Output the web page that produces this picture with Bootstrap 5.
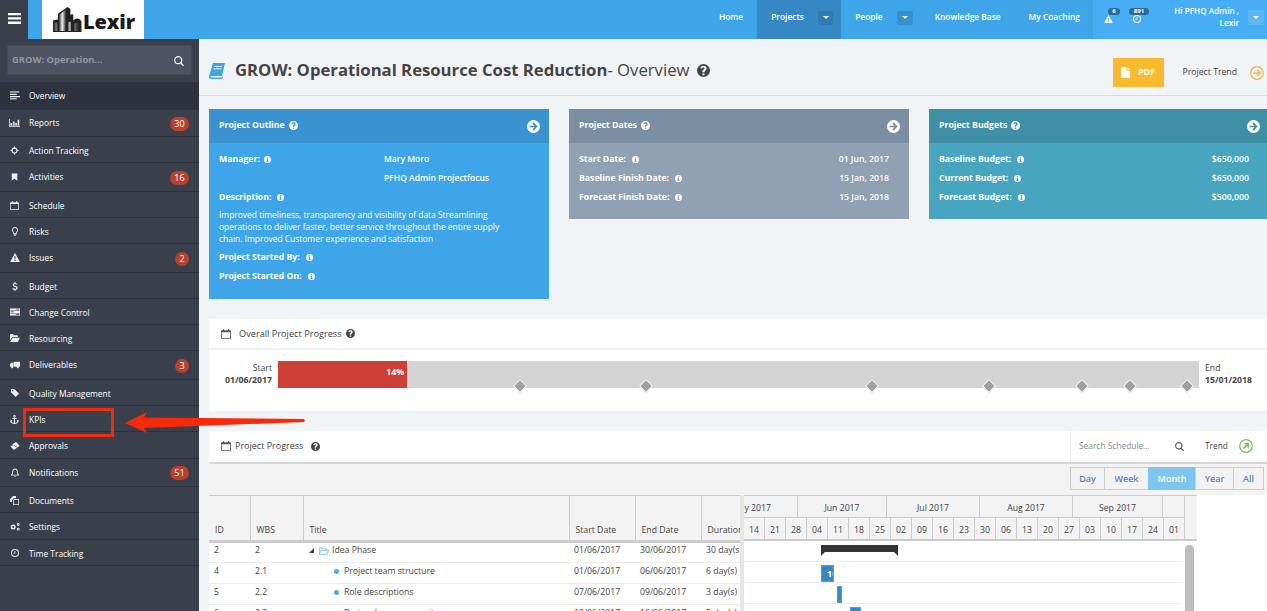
<!DOCTYPE html>
<html lang="en">
<head>
<meta charset="utf-8">
<title>Lexir - Overview</title>
<link rel="stylesheet" href="https://cdn.jsdelivr.net/npm/bootstrap@5.3.0/dist/css/bootstrap.min.css">
<style>
html,body{height:611px;overflow:hidden}
body{font-family:"Open Sans","Liberation Sans",sans-serif;font-size:9px;background:#f0f4f7;color:#444;position:relative}
svg.ic{display:block;flex:none;fill:currentColor}
.topbar{height:39px;background:#3fa5e9;color:#fff}
.tb-toggle{width:28px;background:#3a3f4c;padding-bottom:3px}
.tb-logo{width:102px;margin-left:14px;background:#fff;color:#1a1a1a;font-weight:800;font-size:20px;padding-left:11px;letter-spacing:-.1px}
.tb-logo span{margin:5px 0 0 1px}
.tb-nav{margin-left:auto;height:39px;font-size:8.4px;font-weight:600}
.tb-link{height:39px;color:#fff;text-decoration:none;padding-bottom:4px}
.tb-home{margin-right:14px}
.tb-projects{width:84px;background:#3588c4;padding-left:14px;margin-right:14px}
.tb-people{margin-right:22px}
.tb-kb{margin-right:28px}
.tb-coach{margin-right:13px}
.tb-drop{width:15px;height:14px;border-radius:2px;background:#2f7cb4;margin-left:auto;margin-right:8px}
.tb-people .tb-drop{background:#3590d0;margin-left:14px;margin-right:0;width:16px}
.tb-drop::after{content:"";border:3px solid transparent;border-top:3px solid #fff;margin-top:3px}
.tb-user{width:174px;flex:none;background:#47aef5;position:relative;padding-left:10px}
.tb-alert{width:26px;height:39px;position:relative;flex:none}
.tb-pill{position:absolute;top:8px;background:#2b6a99;color:#fff;font-size:6px;font-weight:700;line-height:7px;height:7px;border-radius:4px;text-align:center}
.tb-ic1{margin:0 0 0 1px;position:relative;top:-1px}
.tb-ic2{margin:0 0 0 4px;position:relative;top:-1px}
.tb-name{width:84px;flex:none;margin-left:6px;margin-bottom:5px;text-align:right;line-height:12px;font-size:8.2px}
.tb-user .tb-drop{background:#5cb8f5;width:16px;height:15px;margin:0 3px 5px 9px;flex:none}
.sidenav{width:199px;height:572px;background:#3a3f4c;flex:none;color:#fff}
.side-searchwrap{height:43px;padding:6px 7px 7px}
.side-search{height:30px;background:#4e5262;border:1px solid #454957;padding:1px 7px 0 4px;color:#92959f;font-weight:700;font-size:9.4px}
.side-search svg{color:#fff}
.side-item{padding:3px 10px 0 8px;border-bottom:1px solid #2d313b;color:#fff;text-decoration:none;font-size:8.4px}
.side-item:hover{color:#fff}
.side-item.up{padding-top:1px}
.side-ic{width:13px;margin-right:8px;display:flex;justify-content:center;color:#eee;position:relative;top:-1px}
.side-active{background:#2e323e;border-bottom:0}
.h26{height:26px}.h27{height:27px}.h28{height:28px}.h29{height:29px}
.side-count{margin-left:auto;background:#b8402f;border-radius:9px;min-width:14px;height:14px;line-height:14px;text-align:center;font-size:9px;font-weight:400;padding:0 4px}
.side-count.wide{width:19px}
.mainpane{flex:1;min-width:0;height:572px;overflow:hidden}
.headrow{height:57px;border-bottom:1px solid #d5dde3;padding:7px 0 0 10px;position:relative}
.headrow h1{font-size:16.7px;font-weight:700;color:#444;margin:0 8px 0 10px;white-space:nowrap}
.headrow h1 span{font-weight:400}
.pdfbtn{width:51px;height:29px;background:#f8bb2f;border:0;border-radius:0;color:#fff;font-size:9px;font-weight:700;margin:3px 19px 0 auto;padding:0}
.pdfbtn:hover{background:#f8bb2f;color:#fff}
.trendlink{font-size:8.7px;color:#444;text-decoration:none;margin:5px 3px 0 0}
.trendlink svg{margin-left:13px}
.infocards{padding:13px 0 0 10px;gap:20px;height:223px;align-items:flex-start}
.infocard{width:340px;flex:none;border:0;border-radius:0;color:#fff;font-size:8.7px}
.infocard .card-header{height:34px;border:0;border-radius:0;padding:9px 9px 0 10px;font-weight:700;color:#fff}
.infocard .card-body{padding:7px 10px 0;}
.head-arrow{margin-top:2px}
.blue-card{background:#3fa5e9;height:190px}.blue-card .card-header{background:#3a92d1}
.slate-card{background:#8fa1b3;height:110px}.slate-card .card-header{background:#7a8fa3}
.teal-card{background:#48a5c0;height:110px}.teal-card .card-header{background:#3f90a6}
.kv{height:19px;display:flex;align-items:center}
.kv b{font-weight:700;margin-right:6px}
.kv .val{margin-left:auto;font-weight:600}
.blue-card .kv .val{margin-left:0;font-weight:600;font-size:8.5px}
.blue-card .kv b.fixed{width:165px;margin-right:0}
.kv-hole{width:165px}
.desc{line-height:12px;margin:2px 0 3px;font-weight:400;font-size:8.45px;max-width:296px}
.whitepanel{background:#fff;border:0;border-radius:0;margin-left:10px;color:#444}
.panel-overall{height:92px}
.panel-head{height:31px;border-bottom:2px solid #eef0f2;padding-left:12px;font-size:9.2px;font-weight:400}
.track-row{padding-top:11px;position:relative}
.track-start{width:69px;text-align:right;line-height:12px;padding:1px 6px 0 0;font-size:8.7px}
.track-start b,.track-end b{display:block;font-weight:700}
.track-end{margin-left:6px;line-height:12px;padding-top:1px;font-size:8.7px}
.track{width:921px;height:27px;background:#d4d4d4;position:relative}
.track .progress-bar{width:129px;height:27px;background:#ce3f38;font-weight:700;color:#fff;text-align:right;padding:5px 3px 0 0;font-size:8.7px;overflow:visible;display:block}
.diamond{position:absolute;top:20px;width:10px;height:10px;background:#a0a0a0;border:1px solid #fff;transform:rotate(45deg)}
.panel-progress{margin-top:20px;height:180px}
.panel-head2{height:33px;border-bottom:2px solid #d6d6d6;padding:0 0 1px 12px;font-size:9px;font-weight:400}
.schedule-search{margin-left:auto;height:31px;border-left:1px solid #eee;width:197px;padding-left:8px;color:#888;font-size:8.4px}
.schedule-search .trendtxt{color:#444}
.schedule-search .glass{color:#555;margin-left:auto;margin-right:21px}
.zoombar{height:31px;background:#f3f3f3;padding:3px 3px 0 0;justify-content:flex-end;display:flex}
.zoombtn{height:23px;border:1px solid #ccc;background:#f3f3f3;color:#5b82c2;font-size:9px;line-height:21px;text-align:center;margin-left:-1px;font-weight:600}
.zoombtn.on{background:#7fc6ef;color:#fff;border-color:#7fc6ef}
.gantt{height:116px;align-items:flex-start}
.gantt-left{width:531px;flex:none}
.gtable{width:531px;table-layout:fixed;border-collapse:collapse;margin:0;font-size:8.7px;color:#444}
.gtable th{height:46px;background:#f3f3f3;border-right:1px solid #ccc;border-top:1px solid #ccc;border-bottom:3px solid #ccc;padding:0 0 3px 6px;vertical-align:bottom;font-weight:400;white-space:nowrap;overflow:hidden}
.gtable td{height:21px;border-bottom:1px solid #ececec;padding:0 0 3px 5px;white-space:nowrap;overflow:hidden;vertical-align:middle;background:#fff}
.treecell{display:flex;align-items:center}
.dot{width:5px;height:5px;border-radius:50%;background:#4cb0dc;margin:0 5px 0 26px}
.split{width:4px;height:116px;background:#e6e6e6;flex:none}
.gantt-right{width:453px;flex:none}
.g-months,.g-weeks{display:flex;background:#f3f3f3;width:453px}
.g-months{height:23px;border-top:1px solid #ccc}
.g-months span{flex:none;height:22px;padding-top:1px;line-height:22px;text-align:center;border-right:1px solid #ccc;border-bottom:1px solid #ccc;font-size:8.7px;white-space:nowrap;overflow:hidden}
.g-months .g-clipped{width:54px;text-align:right;padding-right:26px}
.g-weeks{height:23px;border-bottom:2px solid #ccc}
.g-weeks span{flex:none;width:21px;height:21px;text-align:center;line-height:25px;border-right:1px solid #ccc;font-size:8.7px}
.g-body{display:flex;background:#fff}
.g-rows{width:437px;background:#fff;flex:none}
.g-row{height:21px;border-bottom:1px solid #ececec;position:relative}
.g-summary{position:absolute;left:77px;top:4px;width:77px;height:7px;background:#333}
.g-summary::before,.g-summary::after{content:"";position:absolute;top:7px;border:2.5px solid transparent;border-top-color:#333}
.g-summary::before{left:0;border-left-color:#333}
.g-summary::after{right:0;border-right-color:#333}
.g-task{position:absolute;top:3px;height:17px;background:#3588c4;border:1px solid #45a5e4;color:#fff;font-size:9px;font-weight:700;line-height:15px;overflow:hidden;padding-left:5px;white-space:nowrap}
.g-scroll{width:16px;background:#fff;flex:none;height:72px}
.g-thumb{width:9px;height:70px;margin:4px 0 0 4px;background:#bdbdbd;border-radius:5px}
.callout-box{position:absolute;left:23px;top:408px;width:91px;height:29px;border:3px solid #ee2c12;z-index:5}
.callout-arrow{position:absolute;left:120px;top:405px;z-index:5}
</style>
</head>
<body>
<svg width="0" height="0" class="position-absolute">
<defs>
<linearGradient id="twr" x1="0" y1="0" x2="1" y2="0"><stop offset="0" stop-color="#555"/><stop offset=".45" stop-color="#eee"/><stop offset="1" stop-color="#222"/></linearGradient>
<symbol id="i-left" viewBox="0 0 12 10"><path d="M0 0h11v1.500H0zM0 2.800h8v1.500H0zM0 5.600h12v1.500H0zM0 8.400h8v1.500H0z"/></symbol>
<symbol id="i-bars" viewBox="0 0 14 10"><path d="M0 0h1v9h13v1H0zM2 5h2v3.500H2zM5 3h2v5.500H5zM8 5h2v3.500H8zM11 1h2v7.500h-2z"/></symbol>
<symbol id="i-cross" viewBox="0 0 12 12"><path fill-rule="evenodd" d="M6 0l1 2.100A4 4 0 0 1 9.900 5L12 6l-2.100 1A4 4 0 0 1 7 9.900L6 12 5 9.900A4 4 0 0 1 2.100 7L0 6l2.100-1A4 4 0 0 1 5 2.100zM6 3.500a2.500 2.500 0 1 0 0 5 2.500 2.500 0 0 0 0-5z"/></symbol>
<symbol id="i-mark" viewBox="0 0 10 11"><path d="M1 0h8v11L5 8l-4 3z"/></symbol>
<symbol id="i-cal" viewBox="0 0 12 12"><path fill-rule="evenodd" d="M1 1.500h1.500V0h1.200v1.500h4.600V0h1.200v1.500H11a1 1 0 0 1 1 1V11a1 1 0 0 1-1 1H1a1 1 0 0 1-1-1V2.500a1 1 0 0 1 1-1zM1 4v7h10V4z"/></symbol>
<symbol id="i-bulb" viewBox="0 0 8 12"><path fill-rule="evenodd" d="M4 0a4 4 0 0 1 2.500 7.100V9h-5V7.100A4 4 0 0 1 4 0zm0 1.200a2.800 2.800 0 0 0-1.500 5.200V8h3V6.400A2.800 2.800 0 0 0 4 1.200zM2 9.800h4v1H5.200L4.500 12h-1l-.7-1.200H2z"/></symbol>
<symbol id="i-warn" viewBox="0 0 12 11"><path fill-rule="evenodd" d="M6 0l6 11H0zM5.300 4l.2 3.800h1L6.700 4zm0 4.500v1.300h1.400V8.500z"/></symbol>
<symbol id="i-usd" viewBox="0 0 8 12"><path d="M3.400 0h1.200v1.500c1 .1 2 .5 2.700 1L6.600 3.700C5.800 3.100 5 2.800 4.100 2.800c-.9 0-1.400.4-1.400 1 0 1.700 4.800 1 4.800 4.200 0 1.400-1 2.300-2.900 2.500V12H3.400v-1.500c-1.200-.1-2.300-.6-3-1.300l.8-1.200c.9.700 1.800 1.100 2.800 1.100 1.100 0 1.700-.4 1.700-1.100 0-1.800-4.800-1-4.800-4.200 0-1.300 1-2.200 2.500-2.400z"/></symbol>
<symbol id="i-server" viewBox="0 0 13 10"><path d="M0 0h13v2.800H0zM0 3.500h13v2.800H0zM0 7h13v2.800H0z" /><path fill="#3a3f4c" d="M8 1h4v.8H8zM1 4.500h4v.8H1zM8 8h4v.8H8z"/></symbol>
<symbol id="i-folder" viewBox="0 0 14 11"><path d="M0 1a1 1 0 0 1 1-1h3l1 1.500h5a1 1 0 0 1 1 1V4H3.500L0 8.500zM3.800 5H14l-3 6H0z"/></symbol>
<symbol id="i-truck" viewBox="0 0 14 10"><path d="M5 0h9v7.500H5zM0 4l2-2h2.500v5.500H0zM3 10a1.500 1.500 0 1 1 0-3 1.500 1.500 0 0 1 0 3zM11 10a1.500 1.500 0 1 1 0-3 1.500 1.500 0 0 1 0 3z"/></symbol>
<symbol id="i-tag" viewBox="0 0 11 11"><path fill-rule="evenodd" d="M0 0h4.500L11 6.500 6.500 11 0 4.500zM2.200 1.500a.9.900 0 1 0 0 1.800.9.900 0 0 0 0-1.800z"/></symbol>
<symbol id="i-anchor" viewBox="0 0 12 12"><path fill-rule="evenodd" d="M6 0a1.600 1.600 0 0 1 .8 3v1h2v1.200h-2v5.300c1.500-.2 2.700-1 3-2L8.600 8 11 6l1 3-.9-.3C10.400 11 8.400 12 6 12s-4.400-1-5.100-2.300L0 10l1-4 2.400 2-1.200.5c.3 1 1.500 1.800 3 2V5.200h-2V4h2V3A1.600 1.600 0 0 1 6 0zm0 1a.6.600 0 1 0 0 1.200A.6.600 0 0 0 6 1z"/></symbol>
<symbol id="i-ticket" viewBox="0 0 13 11"><path d="M8 0l5 5-8 6-5-5 1.300-1.300a1.200 1.200 0 0 0 1.700-1.700z"/><path fill="#3a3f4c" d="M4.500 4.500l4 3 .5-.6-4-3z"/></symbol>
<symbol id="i-bell" viewBox="0 0 11 12"><path fill-rule="evenodd" d="M5.500 0a1 1 0 0 1 1 1c2 .4 2.700 2 2.700 4 0 2 .7 3 1.800 4v1H0V9c1.100-1 1.800-2 1.800-4 0-2 .7-3.600 2.700-4a1 1 0 0 1 1-1zm0 2C3.700 2 3 3.400 3 5c0 1.700-.5 3-1.200 4h7.400C8.500 8 8 6.700 8 5c0-1.600-.7-3-2.500-3zM4 10.700h3A1.500 1.500 0 0 1 5.500 12 1.500 1.500 0 0 1 4 10.700z"/></symbol>
<symbol id="i-copy" viewBox="0 0 12 12"><path fill-rule="evenodd" d="M4 0h4v3H5L2.500 5.500V8H0V4zM5.500 4H12v8H4V6zm.5 1.100L5 6.200V11h6V5.100z"/></symbol>
<symbol id="i-cogs" viewBox="0 0 14 11"><path fill-rule="evenodd" d="M4.500 2a3.500 3.500 0 1 1 0 7 3.500 3.500 0 0 1 0-7zm0 2a1.500 1.500 0 1 0 0 3 1.500 1.500 0 0 0 0-3zM11.500 0a2 2 0 1 1 0 4 2 2 0 0 1 0-4zm0 1.300a.7.700 0 1 0 0 1.400.7.700 0 0 0 0-1.400zM11.500 6.500a2 2 0 1 1 0 4 2 2 0 0 1 0-4zm0 1.300a.7.700 0 1 0 0 1.400.7.700 0 0 0 0-1.400z"/></symbol>
<symbol id="i-clock" viewBox="0 0 12 12"><path fill-rule="evenodd" d="M6 0a6 6 0 1 1 0 12A6 6 0 0 1 6 0zm0 1.500a4.500 4.500 0 1 0 0 9 4.500 4.500 0 0 0 0-9zM5.400 3h1.200v3.600H3.500V5.500h1.900z"/></symbol>
<symbol id="i-search" viewBox="0 0 12 12"><path fill-rule="evenodd" d="M5 0a5 5 0 0 1 4 8l3 3-1.200 1.200-3-3A5 5 0 1 1 5 0zm0 1.600a3.400 3.400 0 1 0 0 6.800 3.400 3.400 0 0 0 0-6.800z"/></symbol>
<symbol id="i-help" viewBox="0 0 12 12"><path fill-rule="evenodd" d="M6 0a6 6 0 1 1 0 12A6 6 0 0 1 6 0zM5.100 8.600v1.700h1.800V8.600zM6 1.700C4.500 1.700 3.500 2.400 3.100 3.600l1.400.8c.3-.8.700-1.100 1.400-1.100.6 0 1 .3 1 .8 0 .9-2 1.100-2 2.900v.6h1.900c0-1.300 2.100-1.400 2.100-3.500 0-1.500-1.300-2.400-2.900-2.400z"/></symbol>
<symbol id="i-info" viewBox="0 0 12 12"><path fill-rule="evenodd" d="M6 0a6 6 0 1 1 0 12A6 6 0 0 1 6 0zM4.700 2v1.700h2.400V2zM4 4.800v1.300h.9v2.800H4v1.200h4V8.900h-.9V4.800z"/></symbol>
<symbol id="i-arrow" viewBox="0 0 14 14"><path fill-rule="evenodd" d="M7 0a7 7 0 1 1 0 14A7 7 0 0 1 7 0zm0 2.500L5.700 3.800l2.300 2.300H2.800v1.800H8l-2.300 2.300L7 11.500 11.500 7z"/></symbol>
<symbol id="i-arrowline" viewBox="0 0 14 14"><circle cx="7" cy="7" r="6.300" fill="none" stroke="currentColor" stroke-width="1.200"/><path fill="none" stroke="currentColor" stroke-width="1.300" d="M3.500 7h6.500M7.300 4l3 3-3 3"/></symbol>
<symbol id="i-trendup" viewBox="0 0 14 14"><circle cx="7" cy="7" r="6.300" fill="none" stroke="currentColor" stroke-width="1.200"/><path fill="none" stroke="currentColor" stroke-width="1.600" d="M4.500 9.500l4.500-4.500M5.300 4.700h4v4"/></symbol>
<symbol id="i-file" viewBox="0 0 10 12"><path d="M0 0h6v4h4v8H0zM7 0l3 3H7z"/></symbol>
<symbol id="i-book" viewBox="0 0 16 16"><path d="M4 0h12l-3 13H2.500c-1 0-1 1.500 0 1.500H13l.2-.7.700.3-.4 1.900H2C.3 16-.4 14.200.2 12.500z"/><path fill="#f0f4f7" d="M5.500 3h7.500l-.2 1H5.300zM5 5.200h7.500l-.2 1H4.800z"/></symbol>
<symbol id="i-openfolder" viewBox="0 0 14 11"><path fill="none" stroke="currentColor" d="M.5 9.500V1h4l1 1.500h5V4.500M.5 9.800L3 4.500h10.300L11 10.300H.5z"/></symbol>
<symbol id="i-building" viewBox="0 0 30 28">
  <path fill="#222" d="M0 27V15l5-1V8l10-7 3 2v6l3-.5V15c2.500-3 6.500-3 8.500 1v11z"/>
  <path fill="url(#twr)" d="M6.500 26V9l7-5.500V26z"/>
  <path fill="url(#twr)" d="M1.500 26V17h3v9zM16 26V17c0-1 2.500-1 2.500 0v9zM22 26V18.500c0-1.500 5-1.500 5 0V26z"/>
</symbol>
</defs>
</svg>

<nav class="topbar d-flex align-items-stretch">
  <div class="tb-toggle d-flex align-items-center justify-content-center">
    <svg class="ic" width="13" height="11" viewBox="0 0 13 11"><path d="M0 0h13v2.300H0zM0 4.300h13v2.300H0zM0 8.600h13v2.300H0z"/></svg>
  </div>
  <div class="tb-logo d-flex align-items-center">
    <svg class="ic" width="29" height="27" viewBox="0 0 30 28"><use href="#i-building"/></svg><span>Lexir</span>
  </div>
  <div class="tb-nav d-flex align-items-center">
    <a class="tb-link tb-home d-flex align-items-center" href="#">Home</a>
    <a class="tb-link tb-projects d-flex align-items-center" href="#">Projects<span class="tb-drop d-flex align-items-center justify-content-center"></span></a>
    <a class="tb-link tb-people d-flex align-items-center" href="#">People<span class="tb-drop d-flex align-items-center justify-content-center"></span></a>
    <a class="tb-link tb-kb d-flex align-items-center" href="#">Knowledge Base</a>
    <a class="tb-link tb-coach d-flex align-items-center" href="#">My Coaching</a>
    <div class="tb-user d-flex align-items-center">
      <div class="tb-alert d-flex align-items-center">
        <svg class="ic tb-ic1" width="9" height="8" viewBox="0 0 12 11"><use href="#i-warn"/></svg>
        <span class="tb-pill" style="left:5px;width:12px">6</span>
      </div>
      <div class="tb-alert d-flex align-items-center" style="width:20px">
        <svg class="ic tb-ic2" width="8" height="8" viewBox="0 0 12 12"><use href="#i-clock"/></svg>
        <span class="tb-pill" style="left:0;width:20px">891</span>
      </div>
      <div class="tb-name">Hi PFHQ Admin ,<br>Lexir</div>
      <span class="tb-drop d-flex align-items-center justify-content-center"></span>
    </div>
  </div>
</nav>

<div class="d-flex">
  <aside class="sidenav">
    <div class="side-searchwrap">
      <div class="side-search d-flex align-items-center justify-content-between">
        <span>GROW: Operation...</span>
        <svg class="ic" width="10" height="10" viewBox="0 0 12 12"><use href="#i-search"/></svg>
      </div>
    </div>
    <a class="side-item up side-active h28 d-flex align-items-center" href="#"><span class="side-ic"><svg class="ic" width="10" height="9" viewBox="0 0 12 10"><use href="#i-left"/></svg></span>Overview</a>
    <a class="side-item up h27 d-flex align-items-center" href="#"><span class="side-ic"><svg class="ic" width="11" height="8" viewBox="0 0 14 10"><use href="#i-bars"/></svg></span>Reports<span class="side-count wide">30</span></a>
    <a class="side-item h26 d-flex align-items-center" href="#"><span class="side-ic"><svg class="ic" width="9" height="9" viewBox="0 0 12 12"><use href="#i-cross"/></svg></span>Action Tracking</a>
    <a class="side-item up h29 d-flex align-items-center" href="#"><span class="side-ic"><svg class="ic" width="7" height="8" viewBox="0 0 10 11"><use href="#i-mark"/></svg></span>Activities<span class="side-count wide">16</span></a>
    <a class="side-item h26 d-flex align-items-center" href="#"><span class="side-ic"><svg class="ic" width="9" height="9" viewBox="0 0 12 12"><use href="#i-cal"/></svg></span>Schedule</a>
    <a class="side-item h26 d-flex align-items-center" href="#"><span class="side-ic"><svg class="ic" width="6" height="9" viewBox="0 0 8 12"><use href="#i-bulb"/></svg></span>Risks</a>
    <a class="side-item up h29 d-flex align-items-center" href="#"><span class="side-ic"><svg class="ic" width="10" height="9" viewBox="0 0 12 11"><use href="#i-warn"/></svg></span>Issues<span class="side-count">2</span></a>
    <a class="side-item h26 d-flex align-items-center" href="#"><span class="side-ic"><svg class="ic" width="6" height="9" viewBox="0 0 8 12"><use href="#i-usd"/></svg></span>Budget</a>
    <a class="side-item h26 d-flex align-items-center" href="#"><span class="side-ic"><svg class="ic" width="10" height="8" viewBox="0 0 13 10"><use href="#i-server"/></svg></span>Change Control</a>
    <a class="side-item h26 d-flex align-items-center" href="#"><span class="side-ic"><svg class="ic" width="10" height="8" viewBox="0 0 14 11"><use href="#i-folder"/></svg></span>Resourcing</a>
    <a class="side-item up h29 d-flex align-items-center" href="#"><span class="side-ic"><svg class="ic" width="10" height="8" viewBox="0 0 14 10"><use href="#i-truck"/></svg></span>Deliverables<span class="side-count">3</span></a>
    <a class="side-item h26 d-flex align-items-center" href="#"><span class="side-ic"><svg class="ic" width="8" height="8" viewBox="0 0 11 11"><use href="#i-tag"/></svg></span>Quality Management</a>
    <a class="side-item h26 d-flex align-items-center" href="#"><span class="side-ic"><svg class="ic" width="9" height="9" viewBox="0 0 12 12"><use href="#i-anchor"/></svg></span>KPIs</a>
    <a class="side-item h27 d-flex align-items-center" href="#"><span class="side-ic"><svg class="ic" width="10" height="8" viewBox="0 0 13 11"><use href="#i-ticket"/></svg></span>Approvals</a>
    <a class="side-item up h28 d-flex align-items-center" href="#"><span class="side-ic"><svg class="ic" width="8" height="9" viewBox="0 0 11 12"><use href="#i-bell"/></svg></span>Notifications<span class="side-count wide">51</span></a>
    <a class="side-item h26 d-flex align-items-center" href="#"><span class="side-ic"><svg class="ic" width="9" height="9" viewBox="0 0 12 12"><use href="#i-copy"/></svg></span>Documents</a>
    <a class="side-item h27 d-flex align-items-center" href="#"><span class="side-ic"><svg class="ic" width="10" height="8" viewBox="0 0 14 11"><use href="#i-cogs"/></svg></span>Settings</a>
    <a class="side-item h26 d-flex align-items-center" href="#"><span class="side-ic"><svg class="ic" width="8" height="8" viewBox="0 0 12 12"><use href="#i-clock"/></svg></span>Time Tracking</a>
  </aside>

  <main class="mainpane">
    <div class="headrow d-flex align-items-center">
      <svg class="ic" width="16" height="16" viewBox="0 0 16 16" style="color:#3fa5e9"><use href="#i-book"/></svg>
      <h1>GROW: Operational Resource Cost Reduction<span>- Overview</span></h1>
      <svg class="ic" width="13" height="13" viewBox="0 0 12 12" style="color:#444"><use href="#i-help"/></svg>
      <button class="btn pdfbtn d-flex align-items-center justify-content-center gap-2" type="button"><svg class="ic" width="9" height="11" viewBox="0 0 10 12"><use href="#i-file"/></svg>PDF</button>
      <a class="trendlink d-flex align-items-center" href="#">Project Trend<svg class="ic" width="14" height="14" viewBox="0 0 14 14" style="color:#f2b445"><use href="#i-arrowline"/></svg></a>
    </div>

    <div class="infocards d-flex">
      <section class="card infocard blue-card">
        <div class="card-header d-flex justify-content-between">
          <span class="d-flex align-items-center gap-1 align-self-start" style="height:15px">Project Outline <svg class="ic" width="9" height="9" viewBox="0 0 12 12"><use href="#i-help"/></svg></span>
          <svg class="ic head-arrow" width="13" height="13" viewBox="0 0 14 14"><use href="#i-arrow"/></svg>
        </div>
        <div class="card-body">
          <div class="kv"><b class="fixed d-flex align-items-center gap-1"><span>Manager:</span><svg class="ic" width="7" height="7" viewBox="0 0 12 12"><use href="#i-info"/></svg></b><span class="val">Mary Moro</span></div>
          <div class="kv"><span class="kv-hole"></span><span class="val">PFHQ Admin Projectfocus</span></div>
          <div class="kv"><b>Description:</b><svg class="ic" width="7" height="7" viewBox="0 0 12 12"><use href="#i-info"/></svg></div>
          <p class="desc">Improved timeliness, transparency and visibility of data Streamlining operations to deliver faster, better service throughout the entire supply chain. Improved Customer experience and satisfaction</p>
          <div class="kv"><b>Project Started By:</b><svg class="ic" width="7" height="7" viewBox="0 0 12 12"><use href="#i-info"/></svg></div>
          <div class="kv"><b>Project Started On:</b><svg class="ic" width="7" height="7" viewBox="0 0 12 12"><use href="#i-info"/></svg></div>
        </div>
      </section>
      <section class="card infocard slate-card">
        <div class="card-header d-flex justify-content-between">
          <span class="d-flex align-items-center gap-1 align-self-start" style="height:15px">Project Dates <svg class="ic" width="9" height="9" viewBox="0 0 12 12"><use href="#i-help"/></svg></span>
          <svg class="ic head-arrow" width="13" height="13" viewBox="0 0 14 14"><use href="#i-arrow"/></svg>
        </div>
        <div class="card-body" style="padding-right:20px">
          <div class="kv"><b>Start Date:</b><svg class="ic" width="7" height="7" viewBox="0 0 12 12"><use href="#i-info"/></svg><span class="val">01 Jun, 2017</span></div>
          <div class="kv"><b>Baseline Finish Date:</b><svg class="ic" width="7" height="7" viewBox="0 0 12 12"><use href="#i-info"/></svg><span class="val">15 Jan, 2018</span></div>
          <div class="kv"><b>Forecast Finish Date:</b><svg class="ic" width="7" height="7" viewBox="0 0 12 12"><use href="#i-info"/></svg><span class="val">15 Jan, 2018</span></div>
        </div>
      </section>
      <section class="card infocard teal-card">
        <div class="card-header d-flex justify-content-between" style="padding-right:9px">
          <span class="d-flex align-items-center gap-1 align-self-start" style="height:15px">Project Budgets <svg class="ic" width="9" height="9" viewBox="0 0 12 12"><use href="#i-help"/></svg></span>
          <svg class="ic head-arrow" width="13" height="13" viewBox="0 0 14 14"><use href="#i-arrow"/></svg>
        </div>
        <div class="card-body" style="padding-right:20px">
          <div class="kv"><b>Baseline Budget:</b><svg class="ic" width="7" height="7" viewBox="0 0 12 12"><use href="#i-info"/></svg><span class="val">$650,000</span></div>
          <div class="kv"><b>Current Budget:</b><svg class="ic" width="7" height="7" viewBox="0 0 12 12"><use href="#i-info"/></svg><span class="val">$650,000</span></div>
          <div class="kv"><b>Forecast Budget:</b><svg class="ic" width="7" height="7" viewBox="0 0 12 12"><use href="#i-info"/></svg><span class="val">$500,000</span></div>
        </div>
      </section>
    </div>

    <section class="whitepanel panel-overall">
      <div class="panel-head d-flex align-items-center">
        <svg class="ic" width="10" height="10" viewBox="0 0 12 12" style="color:#555"><use href="#i-cal"/></svg>
        <span class="ms-2">Overall Project Progress</span>
        <svg class="ic ms-1" width="9" height="9" viewBox="0 0 12 12"><use href="#i-help"/></svg>
      </div>
      <div class="track-row d-flex">
        <div class="track-start">Start<b>01/06/2017</b></div>
        <div class="track">
          <div class="progress-bar">14%</div>
          <i class="diamond" style="left:237px"></i>
          <i class="diamond" style="left:363px"></i>
          <i class="diamond" style="left:589px"></i>
          <i class="diamond" style="left:706px"></i>
          <i class="diamond" style="left:799px"></i>
          <i class="diamond" style="left:847px"></i>
          <i class="diamond" style="left:904px"></i>
        </div>
        <div class="track-end">End<b>15/01/2018</b></div>
      </div>
    </section>

    <section class="whitepanel panel-progress">
      <div class="panel-head2 d-flex align-items-center">
        <svg class="ic" width="10" height="10" viewBox="0 0 12 12" style="color:#555"><use href="#i-cal"/></svg>
        <span class="ms-1">Project Progress</span>
        <svg class="ic ms-2" width="9" height="9" viewBox="0 0 12 12"><use href="#i-help"/></svg>
        <div class="schedule-search d-flex align-items-center">
          <span>Search Schedule...</span>
          <svg class="ic glass" width="9" height="9" viewBox="0 0 12 12"><use href="#i-search"/></svg>
          <span class="trendtxt me-2">Trend</span>
          <svg class="ic" width="14" height="14" viewBox="0 0 14 14" style="color:#7cba5b;margin-right:14px;margin-left:3px"><use href="#i-trendup"/></svg>
        </div>
      </div>
      <div class="zoombar">
        <span class="zoombtn" style="width:35px">Day</span>
        <span class="zoombtn" style="width:45px">Week</span>
        <span class="zoombtn on" style="width:48px">Month</span>
        <span class="zoombtn" style="width:39px">Year</span>
        <span class="zoombtn" style="width:31px">All</span>
      </div>
      <div class="gantt d-flex">
        <div class="gantt-left">
          <table class="gtable">
            <colgroup><col style="width:41px"><col style="width:53px"><col style="width:266px"><col style="width:66px"><col style="width:66px"><col style="width:39px"></colgroup>
            <thead><tr><th>ID</th><th>WBS</th><th>Title</th><th>Start Date</th><th>End Date</th><th>Duration</th></tr></thead>
            <tbody>
              <tr><td>2</td><td>2</td><td><div class="treecell"><svg width="5" height="5" viewBox="0 0 5 5" class="ic" style="margin-left:1px;margin-right:5px"><path d="M5 0v5H0z"/></svg><svg class="ic" width="10" height="8" viewBox="0 0 14 11" style="color:#5bb5e6;margin-right:3px"><use href="#i-openfolder"/></svg>Idea Phase</div></td><td>01/06/2017</td><td>30/06/2017</td><td>30 day(s)</td></tr>
              <tr><td>4</td><td>2.1</td><td><div class="treecell"><i class="dot"></i>Project team structure</div></td><td>01/06/2017</td><td>06/06/2017</td><td>6 day(s)</td></tr>
              <tr><td>5</td><td>2.2</td><td><div class="treecell"><i class="dot"></i>Role descriptions</div></td><td>07/06/2017</td><td>09/06/2017</td><td>3 day(s)</td></tr>
              <tr><td>6</td><td>2.3</td><td><div class="treecell"><i class="dot"></i>Review human capacity</div></td><td>10/06/2017</td><td>16/06/2017</td><td>5 day(s)</td></tr>
            </tbody>
          </table>
        </div>
        <div class="split"></div>
        <div class="gantt-right">
          <div class="g-months">
            <span class="g-clipped">y 2017</span><span style="width:89px">Jun 2017</span><span style="width:93px">Jul 2017</span><span style="width:93px">Aug 2017</span><span style="width:90px">Sep 2017</span><span style="width:22px"></span>
          </div>
          <div class="g-weeks"><span>14</span><span>21</span><span>28</span><span>04</span><span>11</span><span>18</span><span>25</span><span>02</span><span>09</span><span>16</span><span>23</span><span>30</span><span>06</span><span>13</span><span>20</span><span>27</span><span>03</span><span>10</span><span>17</span><span>24</span><span>01</span></div>
          <div class="g-body">
            <div class="g-rows">
              <div class="g-row"><div class="g-summary"></div></div>
              <div class="g-row"><div class="g-task" style="left:77px;width:13px">10</div></div>
              <div class="g-row"><div class="g-task" style="left:93px;width:5px;padding:0"></div></div>
              <div class="g-row"><div class="g-task" style="left:106px;width:11px;padding:0"></div></div>
            </div>
            <div class="g-scroll"><div class="g-thumb"></div></div>
          </div>
        </div>
      </div>
    </section>
  </main>
</div>

<div class="callout-box"></div>
<svg class="callout-arrow" width="190" height="32" viewBox="120 405 190 32">
  <path fill="#f72a0a" d="M125 423L147 412L144 417.500L304 419Q305.500 420.500 304 422L144 428L147 433Z"/>
</svg>
<script src="https://cdn.jsdelivr.net/npm/bootstrap@5.3.0/dist/js/bootstrap.bundle.min.js"></script>
</body>
</html>
